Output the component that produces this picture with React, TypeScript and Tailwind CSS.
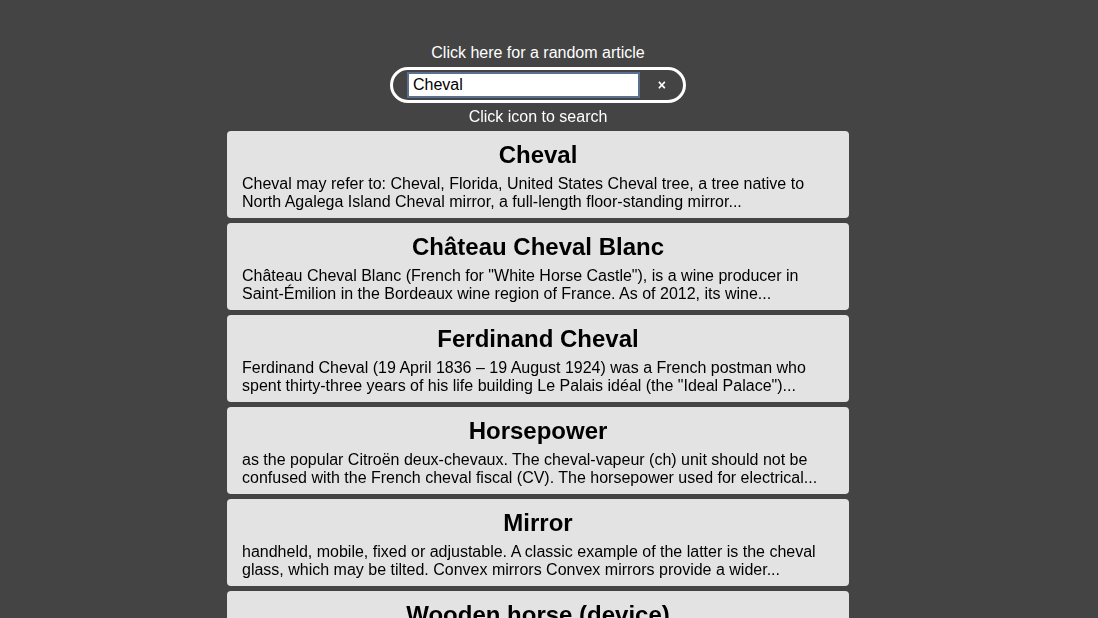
const results = [
  {
    title: 'Cheval',
    snippet:
      'Cheval may refer to: Cheval, Florida, United States Cheval tree, a tree native to North Agalega Island Cheval mirror, a full-length floor-standing mirror...',
  },
  {
    title: 'Château Cheval Blanc',
    snippet:
      'Château Cheval Blanc (French for "White Horse Castle"), is a wine producer in Saint-Émilion in the Bordeaux wine region of France. As of 2012, its wine...',
  },
  {
    title: 'Ferdinand Cheval',
    snippet:
      'Ferdinand Cheval (19 April 1836 – 19 August 1924) was a French postman who spent thirty-three years of his life building Le Palais idéal (the "Ideal Palace")...',
  },
  {
    title: 'Horsepower',
    snippet:
      'as the popular Citroën deux-chevaux. The cheval-vapeur (ch) unit should not be confused with the French cheval fiscal (CV). The horsepower used for electrical...',
  },
  {
    title: 'Mirror',
    snippet:
      'handheld, mobile, fixed or adjustable. A classic example of the latter is the cheval glass, which may be tilted. Convex mirrors Convex mirrors provide a wider...',
  },
  {
    title: 'Wooden horse (device)',
    snippet:
      'The wooden horse was a torture device used in ancient times and into the early modern era, frequently used as a military punishment...',
  },
];

export default function App() {
  return (
    <div className="min-h-[618px] w-full bg-[#444444] font-['Liberation_Sans',Arial,sans-serif] text-base">
      <div className="w-[1076px] flex flex-col items-center pt-[44px] pb-4">
        {/* Search */}
        <a className="text-white leading-[18px] cursor-pointer">Click here for a random article</a>
        <div className="mt-[5px] flex items-center w-[296px] h-[36px] rounded-full border-[3px] border-white pl-[14px] pr-[17px]">
          <input
            defaultValue="Cheval"
            autoFocus
            className="w-[233px] h-[26px] bg-white border-2 border-[#5b6f8f] px-[4px] text-black text-base outline-none"
          />
          <button className="ml-auto text-white text-sm font-bold leading-none">×</button>
        </div>
        <p className="mt-[5px] text-white leading-[18px]">Click icon to search</p>

        {/* Results */}
        <div className="mt-[5px] flex flex-col gap-[5px] w-[622px]">
          {results.map((r) => (
            <div key={r.title} className="bg-[#e3e3e3] rounded-[4px] px-[15px] pt-[10px] pb-[7px] h-[87px] overflow-hidden">
              <h2 className="text-center text-black text-2xl font-bold leading-[28px]">{r.title}</h2>
              <p className="mt-[6px] text-black leading-[18px]">{r.snippet}</p>
            </div>
          ))}
        </div>
      </div>
    </div>
  );
}
